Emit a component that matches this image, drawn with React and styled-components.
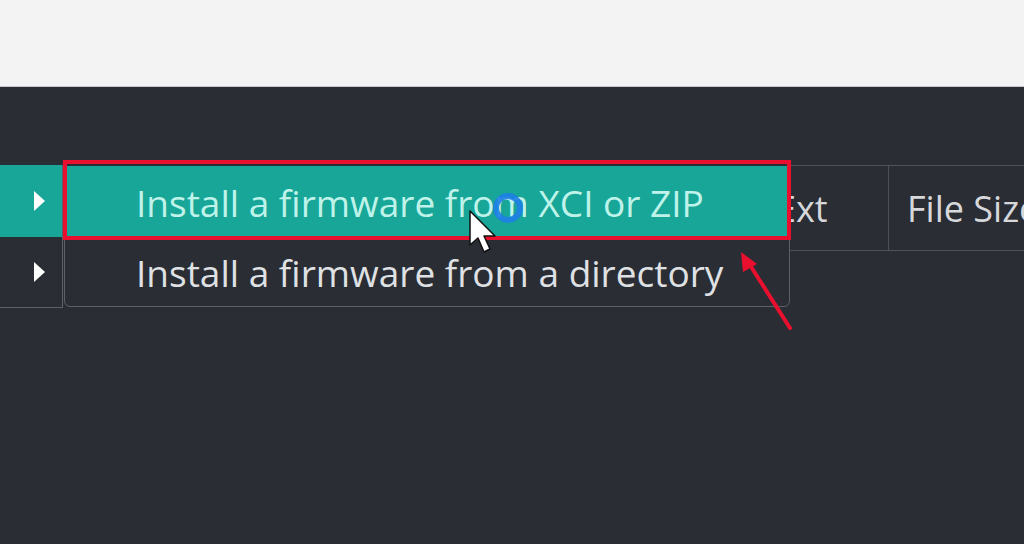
import React from 'react';
import styled, { createGlobalStyle } from 'styled-components';

const Global = createGlobalStyle`
  html, body {
    margin: 0;
    padding: 0;
    background: #2a2d33;
    font-family: "Open Sans", "Noto Sans", sans-serif;
    overflow: hidden;
  }
`;

const Page = styled.div`
  width: 1024px;
  height: 544px;
  display: flex;
  flex-direction: column;
  position: relative;
  overflow: hidden;
`;

const TopBar = styled.div`
  height: 86px;
  background: #f3f3f3;
  border-bottom: 1px solid #c9c9c9;
`;

const Workspace = styled.div`
  flex: 1;
  background: #2a2d33;
  padding-top: 78px;
`;

const HeaderRow = styled.div`
  display: flex;
  height: 84px;
  margin-left: 560px;
  border-top: 1px solid #4d5159;
  border-bottom: 1px solid #4d5159;
`;

const HeaderCell = styled.div`
  width: ${p => p.w}px;
  flex-shrink: 0;
  display: flex;
  align-items: center;
  padding-left: 18px;
  box-sizing: border-box;
  border-left: 1px solid #4d5159;
  color: #d6d8dc;
  font-size: 36px;
  white-space: nowrap;
  overflow: hidden;
`;

const ParentMenu = styled.div`
  position: absolute;
  left: -10px;
  top: 165px;
  width: 72px;
  border-right: 1px solid #5c6068;
  border-bottom: 1px solid #5c6068;
  background: #2a2d33;
  display: flex;
  flex-direction: column;
`;

const ParentItem = styled.div`
  height: ${p => (p.first ? 72 : 70)}px;
  background: ${p => (p.active ? '#17a697' : 'transparent')};
  display: flex;
  align-items: center;
  justify-content: flex-end;
  padding-right: 16px;
`;

const SubMenu = styled.div`
  position: absolute;
  left: 64px;
  top: 163px;
  width: 724px;
  background: #2a2d33;
  border: 1px solid #5c6068;
  border-radius: 0 0 6px 6px;
  padding-top: 2px;
  display: flex;
  flex-direction: column;
`;

const SubItem = styled.div`
  height: ${p => (p.first ? 72 : 68)}px;
  background: ${p => (p.active ? '#17a697' : 'transparent')};
  color: ${p => (p.active ? '#bff3ea' : '#dfe1e4')};
  display: flex;
  align-items: center;
  padding-left: 71px;
  font-size: 37px;
  white-space: nowrap;
`;

const Highlight = styled.div`
  position: absolute;
  left: 63px;
  top: 160px;
  width: 720px;
  height: 72px;
  border: 4px solid #e8102e;
  pointer-events: none;
`;

const Overlay = styled.svg`
  position: absolute;
  left: 0;
  top: 0;
  pointer-events: none;
`;

const Caret = () => (
  <svg width="14" height="22" viewBox="0 0 14 22">
    <path d="M2 1 L13 11 L2 21 Z" fill="#ffffff" />
  </svg>
);

export default function App() {
  return (
    <>
      <Global />
      <Page>
        <TopBar />
        <Workspace>
          <HeaderRow>
            <HeaderCell w={197}>Type</HeaderCell>
            <HeaderCell w={131}>Ext</HeaderCell>
            <HeaderCell w={200}>File Size</HeaderCell>
          </HeaderRow>
        </Workspace>

        <ParentMenu>
          <ParentItem first active><Caret /></ParentItem>
          <ParentItem><Caret /></ParentItem>
        </ParentMenu>

        <SubMenu>
          <SubItem first active>Install a firmware from XCI or ZIP</SubItem>
          <SubItem>Install a firmware from a directory</SubItem>
        </SubMenu>

        <Highlight />

        <Overlay width="1024" height="544" viewBox="0 0 1024 544">
          <circle cx="508" cy="208" r="12" fill="none" stroke="#1f7fe6" strokeWidth="6" opacity="0.9" />
          <path
            d="M470 211 L470 245 L478 238 L484 252 L490 249 L484 236 L495 236 Z"
            fill="#ffffff"
            stroke="#111"
            strokeWidth="1.5"
            strokeLinejoin="round"
          />
          <line x1="790" y1="328" x2="748" y2="262" stroke="#e8102e" strokeWidth="4" strokeLinecap="round" />
          <path d="M741 252 L743 272 L757 264 Z" fill="#e8102e" />
        </Overlay>
      </Page>
    </>
  );
}
